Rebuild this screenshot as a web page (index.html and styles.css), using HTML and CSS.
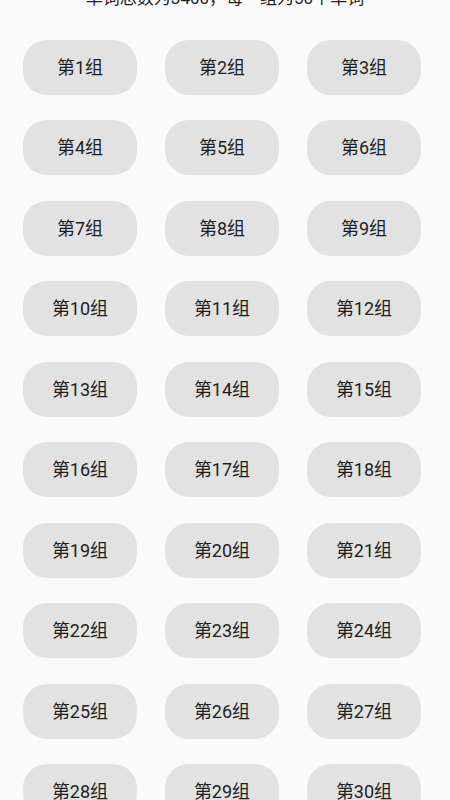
FILE: index.html
```html
<!DOCTYPE html>
<html lang="zh-CN">
<head>
    <meta charset="UTF-8">
    <meta name="viewport" content="width=device-width, initial-scale=1.0">
    <title>单词分组</title>
    <link rel="stylesheet" href="styles.css">
</head>
<body>
    <div class="page">
        <p class="summary">单词总数为3400，每一组为50个单词</p>
        <div class="groups" id="groups"></div>
    </div>

    <script>
        var groups = document.getElementById('groups');
        for (var i = 1; i <= 30; i++) {
            var btn = document.createElement('button');
            btn.className = 'group-btn';
            btn.textContent = '第' + i + '组';
            groups.appendChild(btn);
        }
    </script>
</body>
</html>
```

FILE: styles.css
```css
body {
    margin: 0;
    background: #fafafa;
    font-family: Roboto, "Noto Sans CJK SC", sans-serif;
    color: #1e1e1e;
    overflow: hidden;
}
.page {
    margin-top: -14px;
}
.summary {
    margin: 0;
    text-align: center;
    font-size: 17px;
    line-height: 24px;
    color: #222;
}
.groups {
    display: grid;
    grid-template-columns: repeat(3, 114px);
    column-gap: 28px;
    row-gap: 25.44px;
    padding: 30px 0 0 23px;
}
.group-btn {
    height: 55px;
    border: none;
    border-radius: 24px;
    background: #e1e2e1;
    color: #1e1e1e;
    font-family: inherit;
    font-size: 18px;
    padding: 0 0 3px;
}
```
